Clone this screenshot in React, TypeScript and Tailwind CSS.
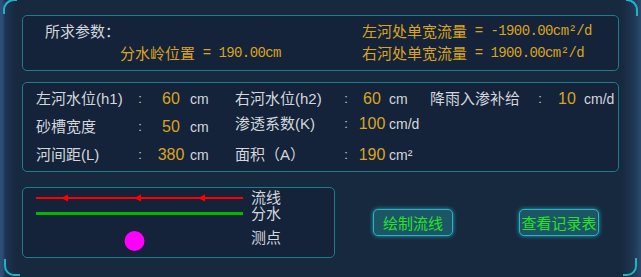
import React from 'react';

const cjk = "[font-family:'Noto_Sans_CJK_SC',sans-serif]";
const mono = "[font-family:'Liberation_Mono','Noto_Sans_CJK_SC',monospace]";
const sans = "[font-family:'Liberation_Sans','Noto_Sans_CJK_SC',sans-serif]";

function Param({ label, value, unit, lw, vm, um }: { label: string, value: string, unit: string, lw: string, vm: string, um: string }) {
    return (
        <div className={`flex items-center h-[28px] text-[15px] ${sans}`}>
            <span className={`${lw} text-[#d3d7dc] whitespace-nowrap`}>{label}</span>
            <span className="w-[6px] text-center text-[#c9cdd2] text-[13px]">:</span>
            <span className={`${vm} w-[32px] text-center text-[#dba41e] text-[16px]`}>{value}</span>
            <span className={`${um} text-[#d3d7dc] text-[14px]`}>{unit}</span>
        </div>
    );
}

export default function App() {
    return (
        <div className="relative w-[641px] h-[277px] overflow-hidden bg-[linear-gradient(to_right,#2d4f78_0px,#2b4b72_3px,#1e3452_5px,#17293e_16px,#17293e_622px,#1f3855_634px,#2c4a6c_641px)] px-[22px] pt-[15px]">
            {/* corner accents */}
            <div className="absolute left-[3px] top-[-1px] w-[14px] h-[15px] border-l-2 border-t-2 border-[#1fb3c4] rounded-tl-[11px]" />
            <div className="absolute right-[3px] top-[-1px] w-[12px] h-[17px] border-r-2 border-t-2 border-[#1fb3c4] rounded-tr-[11px]" />
            <div className="absolute left-[4px] bottom-[1px] w-[16px] h-[17px] border-l-2 border-b-2 border-[#1fb3c4] rounded-bl-[10px]" />
            <div className="absolute right-[4px] bottom-[1px] w-[14px] h-[18px] border-r-2 border-b-2 border-[#1fb3c4] rounded-br-[10px]" />

            {/* result panel */}
            <div className="h-[56px] border border-[#1c7d8d] rounded-[5px] bg-[#14233a] pl-[22px] pt-[4px]">
                <div className="flex h-[22px] items-center">
                    <div className={`w-[317px] text-[15px] text-[#d3d7dc] ${cjk}`}>所求参数：</div>
                    <div className="flex items-center text-[#dba41e] whitespace-nowrap">
                        <span className={`text-[15px] ${cjk}`}>左河处单宽流量</span>
                        <span className={`text-[14px] tracking-[-0.6px] ${mono}`}>&nbsp;=&nbsp;-1900.00cm²/d</span>
                    </div>
                </div>
                <div className="flex h-[22px] items-center">
                    <div className="w-[317px] pl-[75px] flex items-center text-[#dba41e] whitespace-nowrap">
                        <span className={`text-[15px] ${cjk}`}>分水岭位置</span>
                        <span className={`text-[14px] tracking-[-0.6px] ${mono}`}>&nbsp;=&nbsp;190.00cm</span>
                    </div>
                    <div className="flex items-center text-[#dba41e] whitespace-nowrap">
                        <span className={`text-[15px] ${cjk}`}>右河处单宽流量</span>
                        <span className={`text-[14px] tracking-[-0.6px] ${mono}`}>&nbsp;=&nbsp;1900.00cm²/d</span>
                    </div>
                </div>
            </div>

            {/* input params */}
            <div className="mt-[11px] h-[90px] border border-[#1c7d8d] rounded-[5px] bg-[#14233a] pl-[13px] pt-[2px] flex">
                <div className="w-[199px]">
                    <Param label="左河水位(h1)" value="60" unit="cm" lw="w-[101px]" vm="ml-[12px]" um="ml-[3px]" />
                    <Param label="砂槽宽度" value="50" unit="cm" lw="w-[101px]" vm="ml-[12px]" um="ml-[3px]" />
                    <Param label="河间距(L)" value="380" unit="cm" lw="w-[101px]" vm="ml-[12px]" um="ml-[3px]" />
                </div>
                <div className="w-[195px]">
                    <Param label="右河水位(h2)" value="60" unit="cm" lw="w-[108px]" vm="ml-[7px]" um="ml-[1px]" />
                    <div className="-mt-[3px] mb-[3px]">
                        <Param label="渗透系数(K)" value="100" unit="cm/d" lw="w-[108px]" vm="ml-[7px]" um="ml-[1px]" />
                    </div>
                    <Param label="面积（A）" value="190" unit="cm²" lw="w-[108px]" vm="ml-[7px]" um="ml-[1px]" />
                </div>
                <div>
                    <Param label="降雨入渗补给" value="10" unit="cm/d" lw="w-[107px]" vm="ml-[8px]" um="ml-[1px]" />
                </div>
            </div>

            {/* legend + buttons */}
            <div className="mt-[15px] flex items-start">
                <div className="w-[313px] h-[71px] border border-[#1c7d8d] rounded-[5px] bg-[#14233a] flex">
                    <svg width="228" height="69" viewBox="0 0 228 69">
                        <line x1="13" y1="10" x2="220" y2="10" stroke="#ff0000" strokeWidth="2" />
                        <polygon points="38,10 45,6.5 45,13.5" fill="#ff0000" />
                        <polygon points="111,10 118,6.5 118,13.5" fill="#ff0000" />
                        <polygon points="175,10 182,6.5 182,13.5" fill="#ff0000" />
                        <line x1="13" y1="25.5" x2="220" y2="25.5" stroke="#00b800" strokeWidth="3" />
                        <circle cx="111.5" cy="53" r="10" fill="#ff00ff" />
                    </svg>
                    <div className={`pt-[1px] text-[15px] text-[#d3d7dc] ${cjk}`}>
                        <div className="h-[16px] leading-[16px]">流线</div>
                        <div className="h-[16px] leading-[16px]">分水</div>
                        <div className="mt-[8px] h-[16px] leading-[16px]">测点</div>
                    </div>
                </div>
                <button className={`ml-[38px] mt-[22px] w-[80px] h-[27px] border border-[#27b4c4] bg-[#1b5566] rounded-[5px] shadow-[0_0_4px_#1fa6b5] text-[#27e227] text-[15px] leading-none ${cjk}`}>
                    绘制流线
                </button>
                <button className={`ml-[66px] mt-[22px] w-[80px] h-[27px] border border-[#27b4c4] bg-[#1b5566] rounded-[5px] shadow-[0_0_4px_#1fa6b5] text-[#27e227] text-[15px] leading-none whitespace-nowrap overflow-visible ${cjk}`}>
                    查看记录表
                </button>
            </div>
        </div>
    );
}
